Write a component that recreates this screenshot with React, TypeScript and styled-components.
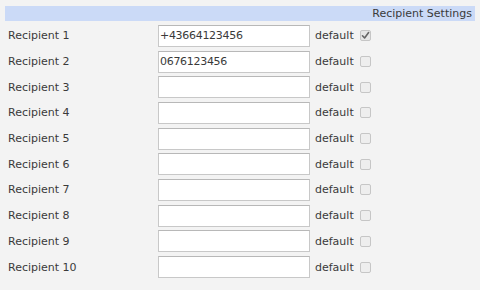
import React from "react";
import styled, { createGlobalStyle } from "styled-components";

const recipients = [
  { value: "+43664123456", isDefault: true },
  { value: "0676123456", isDefault: false },
  { value: "", isDefault: false },
  { value: "", isDefault: false },
  { value: "", isDefault: false },
  { value: "", isDefault: false },
  { value: "", isDefault: false },
  { value: "", isDefault: false },
  { value: "", isDefault: false },
  { value: "", isDefault: false },
];

const Check = ({ checked }: { checked: boolean }) => (
  <Box $checked={checked}>
    {checked && (
      <svg width="9" height="9" viewBox="0 0 9 9">
        <path d="M1.5 4.8 L3.6 7 L7.6 1.6" fill="none" stroke="#666" strokeWidth="1.6" strokeLinecap="round" strokeLinejoin="round" />
      </svg>
    )}
  </Box>
);

const App = () => {
  return (
    <>
      <GlobalStyle />
      <Page>
        <Header>Recipient Settings</Header>
        <List>
          {recipients.map((r, i) => (
            <Row key={i}>
              <Label>Recipient {i + 1}</Label>
              <Field defaultValue={r.value} />
              <DefaultCell>
                default
                <Check checked={r.isDefault} />
              </DefaultCell>
            </Row>
          ))}
        </List>
      </Page>
    </>
  );
};

export default App;

const GlobalStyle = createGlobalStyle`
  body {
    margin: 0;
    background: #f3f3f3;
    font-family: "DejaVu Sans", "Liberation Sans", sans-serif;
    font-size: 11px;
    color: #3a3a3a;
  }
`;

const Page = styled.div`
  padding: 6px 5px 0 5px;
  width: 470px;
`;

const Header = styled.div`
  height: 15px;
  line-height: 15px;
  background: #cbdaf7;
  text-align: right;
  padding-right: 3px;
  color: #3a3a3a;
`;

const List = styled.div`
  display: grid;
  grid-auto-rows: 25.7px;
  padding-top: 2px;
`;

const Row = styled.div`
  display: grid;
  grid-template-columns: 153px 152px auto;
  align-items: center;
`;

const Label = styled.span`
  padding-left: 3px;
`;

const Field = styled.input`
  box-sizing: border-box;
  width: 152px;
  height: 22px;
  margin: 0;
  padding: 0 1px;
  border: 1px solid #c8c8c8;
  border-top-color: #b8b8b8;
  background: #fff;
  font-family: "DejaVu Sans", "Liberation Sans", sans-serif;
  font-size: 11px;
  letter-spacing: -0.3px;
  color: #3a3a3a;
  outline: none;
`;

const DefaultCell = styled.span`
  display: flex;
  align-items: center;
  gap: 6px;
  padding-left: 5px;
`;

const Box = styled.span<{ $checked: boolean }>`
  box-sizing: border-box;
  width: 11px;
  height: 11px;
  border: 1px solid #c6c6c6;
  border-radius: 2px;
  background: ${(p) => (p.$checked ? "#e6e6e6" : "#eeeeee")};
  display: flex;
  align-items: center;
  justify-content: center;
`;
